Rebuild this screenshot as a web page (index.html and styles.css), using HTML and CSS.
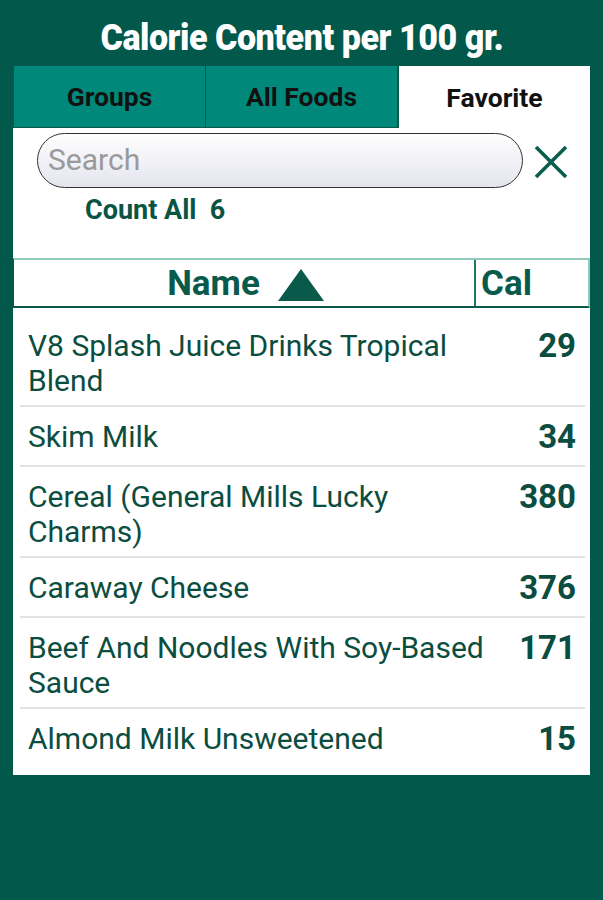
FILE: index.html
```html
<!DOCTYPE html>
<html lang="en">
<head>
    <meta charset="UTF-8">
    <meta name="viewport" content="width=device-width, initial-scale=1.0">
    <title>Calorie Content</title>
    <link rel="stylesheet" href="styles.css">
</head>
<body>
    <h1 class="title"><span>Calorie Content per 100 gr.</span></h1>

    <div class="tabs">
        <div class="tab">Groups</div>
        <div class="tab">All Foods</div>
        <div class="tab active">Favorite</div>
    </div>

    <div class="panel">
        <div class="search-row">
            <div class="search">Search</div>
            <svg class="clear" width="36" height="34" viewBox="0 0 36 34">
                <path d="M3 2 L33 32 M33 2 L3 32" stroke="#0b5e4e" stroke-width="3.6" fill="none"/>
            </svg>
        </div>
        <div class="count">Count All&nbsp;&nbsp;6</div>

        <div class="table-head">
            <div class="head-name">
                <span>Name</span>
                <svg width="48" height="34" viewBox="0 0 48 34">
                    <polygon points="24,1 47,33 1,33" fill="#0a5a4c"/>
                </svg>
            </div>
            <div class="head-cal">Cal</div>
        </div>

        <div class="list">
            <div class="row">
                <div class="name">V8 Splash Juice Drinks Tropical Blend</div>
                <div class="cal">29</div>
            </div>
            <div class="row">
                <div class="name">Skim Milk</div>
                <div class="cal">34</div>
            </div>
            <div class="row">
                <div class="name">Cereal (General Mills Lucky Charms)</div>
                <div class="cal">380</div>
            </div>
            <div class="row">
                <div class="name">Caraway Cheese</div>
                <div class="cal">376</div>
            </div>
            <div class="row">
                <div class="name">Beef And Noodles With Soy-Based Sauce</div>
                <div class="cal">171</div>
            </div>
            <div class="row last">
                <div class="name">Almond Milk Unsweetened</div>
                <div class="cal">15</div>
            </div>
        </div>
    </div>
</body>
</html>
```

FILE: styles.css
```css
body {
    margin: 0;
    background-color: #02584b;
    font-family: Roboto, "Liberation Sans", sans-serif;
    height: 900px;
}
.title {
    margin: 0;
    height: 66px;
    padding-top: 17px;
    box-sizing: border-box;
    text-align: center;
    color: white;
    font-weight: 900;
    font-size: 37px;
    line-height: 42px;
    letter-spacing: -0.5px;
}
.title span {
    display: inline-block;
    transform: scaleX(0.92);
}
.tabs {
    display: flex;
    margin: 0 13px 0 14px;
    height: 62px;
}
.tab {
    flex: 1;
    display: flex;
    align-items: center;
    justify-content: center;
    background-color: #00897b;
    color: #111;
    font-weight: bold;
    font-size: 26.5px;
    border-right: 1px solid #0a5a4c;
    border-bottom: 1px solid #0a5a4c;
}
.tab.active {
    background-color: white;
    border-right: none;
    border-bottom: none;
    border-left: 1px solid #0a5a4c;
}
.panel {
    background-color: white;
    margin: 0 13px 0 13px;
    height: 647px;
    box-sizing: border-box;
}
.search-row {
    display: flex;
    align-items: center;
    padding: 5px 0 0 24px;
}
.search {
    width: 486px;
    height: 55px;
    box-sizing: border-box;
    border: 1.5px solid #333;
    border-radius: 28px;
    background: linear-gradient(#ffffff, #e4e4ee);
    color: #9a9a9a;
    font-size: 30px;
    line-height: 52px;
    padding-left: 10px;
}
.clear {
    margin-left: 10px;
    margin-top: 2px;
}
.count {
    padding: 5px 0 0 72px;
    height: 65px;
    line-height: 34px;
    color: #0a5444;
    font-weight: bold;
    font-size: 27px;
}
.table-head {
    display: flex;
    height: 50px;
    box-sizing: border-box;
    border-top: 2px solid #8fcabd;
    border-bottom: 2px solid #0a5a4c;
    border-right: 2px solid #8fcabd;
    border-left: 1px solid #0a5a4c;
    color: #0a5a4c;
    font-weight: bold;
    font-size: 35px;
}
.head-name {
    width: 462px;
    display: flex;
    align-items: center;
    justify-content: center;
    gap: 17px;
    border-right: 2px solid #1e7a66;
    padding-left: 4px;
    box-sizing: border-box;
}
.head-name svg {
    margin-top: 3px;
}
.head-cal {
    display: flex;
    align-items: center;
    padding-left: 5px;
}
.list {
    padding: 8px 5px 0 7px;
}
.row {
    display: flex;
    min-height: 60px;
    box-sizing: border-box;
    padding: 12px 0 7px 8px;
    border-bottom: 2px solid #e2e2e2;
    color: #0b4d40;
}
.row.last {
    border-bottom: none;
}
.name {
    width: 472px;
    font-size: 30px;
    line-height: 35px;
}
.cal {
    flex: 1;
    text-align: right;
    padding-right: 9px;
    font-weight: bold;
    font-size: 33px;
    line-height: 36px;
}
```
